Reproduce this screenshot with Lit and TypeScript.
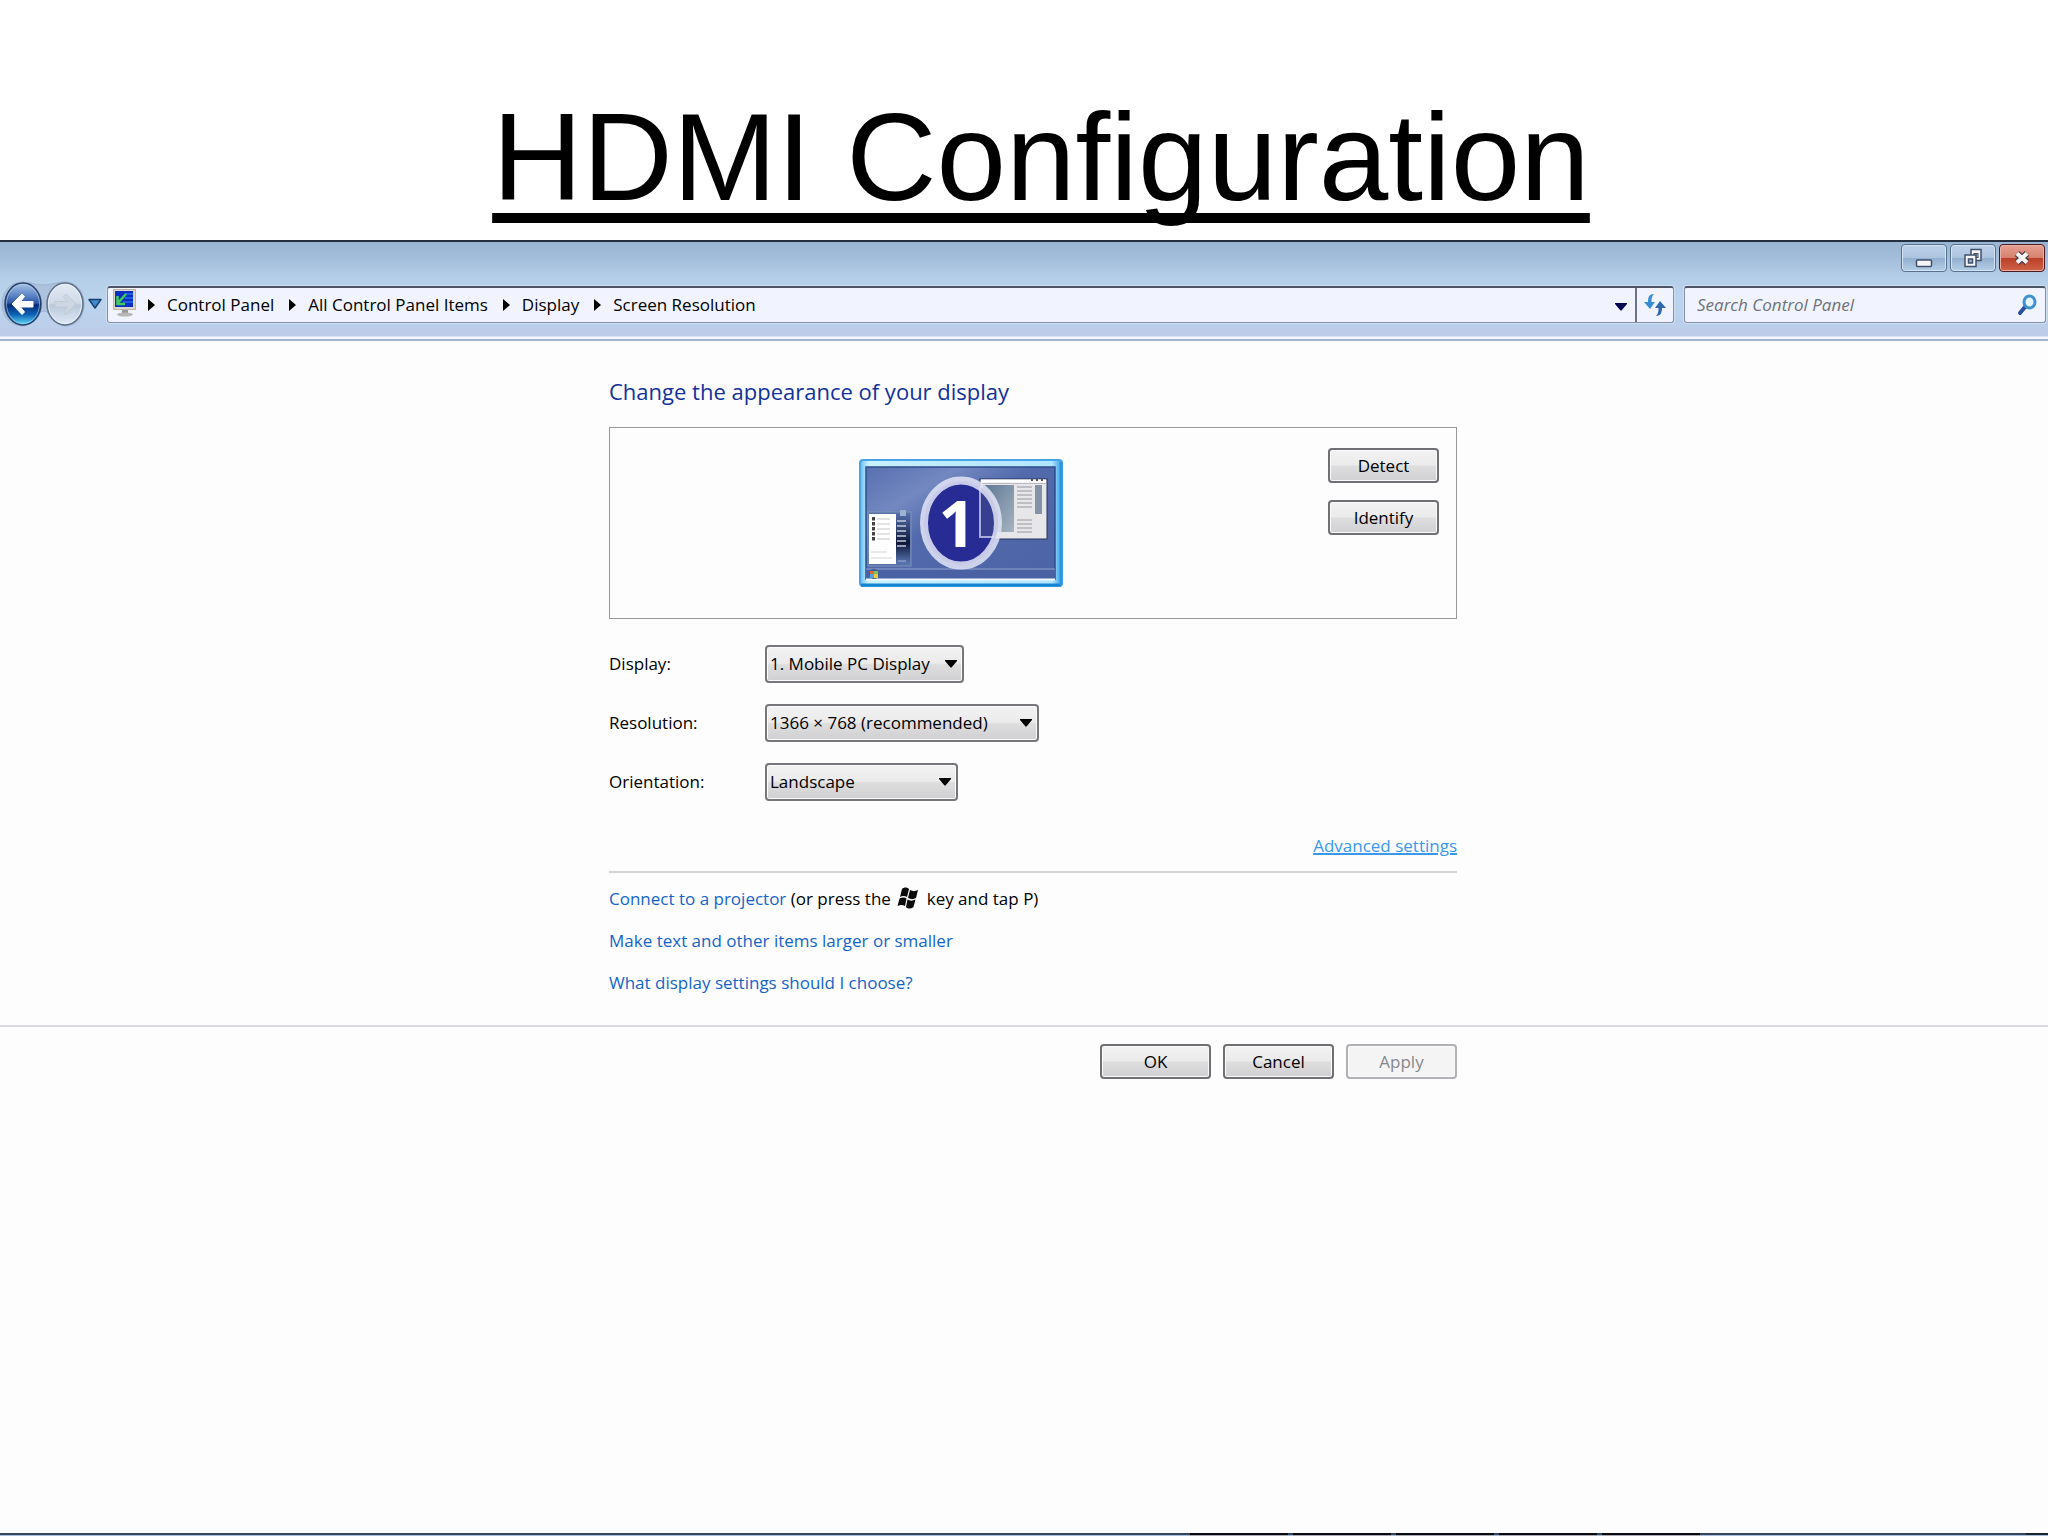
import { LitElement, html, css, svg } from "lit";
import { customElement, state } from "lit/decorators.js";

interface Choice {
  id: string;
  label: string;
  size: string;
  options: string[];
}

const CRUMBS = ["Control Panel", "All Control Panel Items", "Display", "Screen Resolution"];

const CHOICES: Choice[] = [
  { id: "display", label: "Display:", size: "small", options: ["1. Mobile PC Display"] },
  { id: "resolution", label: "Resolution:", size: "large", options: ["1366 × 768 (recommended)", "1280 × 720", "1024 × 768"] },
  { id: "orientation", label: "Orientation:", size: "narrow", options: ["Landscape", "Portrait"] },
];

const crumbArrow = html`<svg class="crumb-arrow" width="7" height="12" viewBox="0 0 7 12" aria-hidden="true"><path d="M0 0L7 6L0 12Z" fill="#000" /></svg>`;

const downArrow = html`<svg class="down-arrow" width="12" height="8" viewBox="0 0 12 8" aria-hidden="true"><path d="M0 0H12V1L6.5 7.5H5.5L0 1Z" fill="currentColor" /></svg>`;

@customElement("nav-bar")
export class NavBar extends LitElement {
  static styles = css`
    :host { display: block; }
    .chrome {
      border-top: 2px solid #24303f;
      border-bottom: 2px solid #a5b3cc;
      background: linear-gradient(#9ab5d2 0, #a0bbd8 12px, #b7d0ea 40px, #bbd4ee 60px, #bccce9 94px, #f0f6fc 95px, #f0f6fc 100%);
    }
    button { font: inherit; margin: 0; padding: 0; border: 0; background: none; }
    .captions { display: flex; justify-content: flex-end; gap: 3px; padding: 2px 3px 0; }
    .caption {
      display: grid;
      place-items: center;
      box-sizing: border-box;
      width: 46px;
      height: 28px;
      border: 1px solid #56708f;
      border-radius: 4px;
      box-shadow: inset 0 0 0 1px #d5e3f2;
      background: linear-gradient(#bdd0e8 0, #adc4df 50%, #92afce 51%, #b4cfe8 100%);
    }
    .caption.close {
      border-color: #4d1820;
      box-shadow: inset 0 0 0 1px #eeb2a5;
      background: linear-gradient(#e5a092 0, #d78270 48%, #bb3f29 50%, #cf6347 100%);
    }
    .row { display: flex; align-items: center; padding: 10px 2px 13px 4px; }
    .history { position: relative; display: flex; gap: 4px; height: 44px; }
    .tray { position: absolute; left: -3px; top: -1px; }
    .round { position: relative; display: block; width: 38px; height: 44px; }
    .recent { display: block; margin: 0 5px 0 4px; height: 12px; line-height: 0; }
    .history svg, .caption svg, .refresh svg { display: block; }
    .address {
      flex: 1;
      display: flex;
      align-items: stretch;
      box-sizing: border-box;
      height: 37px;
      border: 1px solid #8390a5;
      border-top: 2px solid #4c5567;
      border-radius: 3px;
      background: #f1f4fe;
      box-shadow: 0 0 0 1px #cfdff2;
    }
    .crumbs { flex: 1; display: flex; align-items: center; list-style: none; margin: 0; padding: 0 0 0 5px; }
    .crumbs li { display: flex; align-items: center; }
    .crumbs a { color: #000; text-decoration: none; line-height: 24px; }
    .place { display: block; margin-right: 11px; margin-bottom: 4px; }
    .crumb-arrow { margin-right: 12px; }
    .crumbs li + li .crumb-arrow { margin-left: 15px; }
    .history-list { width: 28px; color: #05054f; }
    .refresh { display: grid; place-items: center; width: 38px; border-left: 2px solid #6b7486; }
    .search {
      display: flex;
      align-items: center;
      box-sizing: border-box;
      width: 362px;
      height: 37px;
      margin-left: 10px;
      padding: 0 8px 0 12px;
      border: 1px solid #8390a5;
      border-top: 2px solid #4c5567;
      border-radius: 3px;
      background: #f1f4fe;
      box-shadow: 0 0 0 1px #cfdff2;
    }
    .search input { flex: 1; min-width: 0; border: 0; padding: 0; outline: 0; background: none; font: inherit; font-style: italic; }
    .search input::placeholder { color: #6f727a; opacity: 1; }
  `;

  render() {
    return html`
      <header class="chrome">
        <div class="captions">
          <button class="caption" aria-label="Minimize">
            <svg width="18" height="20" viewBox="0 0 18 20"><rect x="1.5" y="12" width="15" height="6.5" rx="1" fill="#f6f6f6" stroke="#41506a" stroke-width="1.5" /></svg>
          </button>
          <button class="caption" aria-label="Restore">
            <svg width="20" height="20" viewBox="0 0 20 20">
              <rect x="8" y="1.5" width="10" height="11" fill="#f6f6f6" stroke="#41506a" stroke-width="1.5" />
              <rect x="11" y="5.5" width="4" height="4" fill="#9db6d2" stroke="#41506a" />
              <rect x="2" y="7" width="11" height="11.5" fill="#f6f6f6" stroke="#41506a" stroke-width="1.5" />
              <rect x="5.5" y="11" width="4" height="4" fill="#9db6d2" stroke="#41506a" stroke-width="1.5" />
            </svg>
          </button>
          <button class="caption close" aria-label="Close">
            <svg width="18" height="18" viewBox="0 0 18 18">
              <path d="M4 4.500L14 13.500M14 4.500L4 13.500" stroke="#4a3f4c" stroke-width="6.500" />
              <path d="M4 4.500L14 13.500M14 4.500L4 13.500" stroke="#f8f4f4" stroke-width="4" />
            </svg>
          </button>
        </div>
        <nav class="row">
          <div class="history">
            <svg class="tray" width="84" height="46" viewBox="0 0 84 46" aria-hidden="true">
              <path d="M22 1C30 1 34 4 42 4S56 1 64 1C76 1 83 11 83 23S76 45 64 45C54 45 50 30 43 30S32 45 22 45C9 45 1 35 1 23S9 1 22 1Z" fill="#adc2dc" stroke="#9db3cf" />
            </svg>
            <button class="round" aria-label="Back">
              <svg width="38" height="44" viewBox="0 0 38 44">
                <defs>
                  <linearGradient id="blue" x1="0" y1="0" x2="0" y2="1">
                    <stop offset="0" stop-color="#a9c4e8" /><stop offset=".3" stop-color="#5c84c4" /><stop offset=".48" stop-color="#2c56a4" />
                    <stop offset=".52" stop-color="#062a78" /><stop offset=".75" stop-color="#0d62b4" /><stop offset="1" stop-color="#5fe0fa" />
                  </linearGradient>
                </defs>
                <ellipse cx="19" cy="22" rx="18" ry="21" fill="url(#blue)" stroke="#27406c" stroke-width="1.5" />
                <ellipse cx="19" cy="22" rx="16.5" ry="19.5" fill="none" stroke="#b7d2f0" stroke-opacity=".6" />
                <path d="M8 22L18 12L20.5 14.500L16.500 19.500H29V25H16.500L20.500 30L18 32.500Z" fill="#fff" stroke="#fff" stroke-linejoin="round" />
              </svg>
            </button>
            <button class="round" aria-label="Forward">
              <svg width="38" height="44" viewBox="0 0 38 44">
                <defs>
                  <linearGradient id="pale" x1="0" y1="0" x2="0" y2="1">
                    <stop offset="0" stop-color="#e2eaf4" /><stop offset=".48" stop-color="#cfdae8" />
                    <stop offset=".52" stop-color="#b9c8da" /><stop offset="1" stop-color="#dfeaf6" />
                  </linearGradient>
                </defs>
                <ellipse cx="19" cy="22" rx="18" ry="21" fill="url(#pale)" stroke="#5f7088" stroke-width="1.5" />
                <ellipse cx="19" cy="22" rx="16.5" ry="19.5" fill="none" stroke="#eef4fa" stroke-opacity=".8" />
                <path d="M30 22L20 12L17.5 14.500L21.500 19.500H9V25H21.500L17.500 30L20 32.500Z" fill="#cdd6e1" stroke="#c0cad7" stroke-linejoin="round" />
              </svg>
            </button>
          </div>
          <button class="recent" aria-label="Recent pages">
            <svg width="14" height="12" viewBox="0 0 14 12"><path d="M1 1.5H13L7 10Z" fill="#3f8fce" stroke="#1b3f70" stroke-width="1.5" stroke-linejoin="round" /></svg>
          </button>
          <div class="address">
            <ol class="crumbs">
              <svg class="place" width="24" height="28" viewBox="0 0 24 28" aria-hidden="true">
                <rect x=".5" y=".5" width="22" height="20" fill="#ddd6cb" stroke="#bdb5aa" />
                <rect x="2" y="2" width="18" height="16" fill="#0b2ec4" />
                <path d="M12 5H20M12 9H20M10 13H20" stroke="#2470e8" stroke-width="1.5" />
                <path d="M13 5L5 14M4.500 7V15H12" fill="none" stroke="#3ccf5a" stroke-width="2.500" />
                <path d="M9 21H15V24H9Z" fill="#9a9a9a" /><ellipse cx="12" cy="25.5" rx="8" ry="2" fill="#b9b7b4" />
              </svg>
              ${CRUMBS.map((name) => html`<li>${crumbArrow}<a href="#">${name}</a></li>`)}
            </ol>
            <button class="history-list" aria-label="Previous locations">${downArrow}</button>
            <button class="refresh" aria-label="Refresh">
              <svg width="22" height="24" viewBox="0 0 22 24">
                <path d="M10 1C5 1 4 4 4 9H0L6 16L11 9H7.500C7.500 5 8 3 10 1Z" fill="#3a8fd4" />
                <path d="M12 23C17 23 18 19 18 15H22L16 8L11 15H14.500C14.500 19 14 21 12 23Z" fill="#2f66b0" />
              </svg>
            </button>
          </div>
          <label class="search">
            <input type="search" placeholder="Search Control Panel" aria-label="Search Control Panel" />
            <svg width="20" height="22" viewBox="0 0 20 22" aria-hidden="true">
              <path d="M8 13L3 19" stroke="#2a4fa0" stroke-width="4" stroke-linecap="round" />
              <ellipse cx="12.5" cy="8" rx="5.5" ry="6" fill="#e6f4fe" stroke="#3f92d2" stroke-width="3" />
            </svg>
          </label>
        </nav>
      </header>
    `;
  }
}

@customElement("monitor-preview")
export class MonitorPreview extends LitElement {
  static styles = css`
    :host { display: block; }
    .monitor { display: block; }
    .number { font: bold 65px "Open Sans", "Noto Sans", sans-serif; }
  `;

  render() {
    const list = [0, 1, 2, 3, 4].map((i) => svg`
      <rect x="13" y=${58 + i * 5} width="3" height="3.5" fill="#444" />
      <path d=${`M18 ${60 + i * 5}H31`} stroke="#c5c5c8" />`);
    const menu = [0, 1, 2, 3, 4, 5].map((i) => svg`<path d=${`M38 ${62 + i * 5}H47`} stroke="#c4cbe0" stroke-width="1.5" />`);
    const lines = [28, 32, 36, 40, 44, 48, 61, 65, 69, 73].map((y) => svg`<path d=${`M158 ${y}H173`} stroke="#b2b2b6" stroke-width="1.5" />`);
    return html`
      <svg class="monitor" width="204" height="128" viewBox="0 0 204 128" role="img" aria-label="Monitor 1">
        <defs>
          <linearGradient id="frame" x1="0" y1="0" x2="1" y2="0"><stop offset="0" stop-color="#6cb9ee" /><stop offset=".04" stop-color="#c8f0ff" /><stop offset=".95" stop-color="#b2e6ff" /><stop offset="1" stop-color="#329be4" /></linearGradient>
          <linearGradient id="desk" x1="0" y1="0" x2="1" y2="1"><stop offset="0" stop-color="#5870b0" /><stop offset=".25" stop-color="#7388c0" /><stop offset=".45" stop-color="#526aac" /><stop offset="1" stop-color="#4c63a4" /></linearGradient>
          <linearGradient id="pane" x1="0" y1="0" x2="1" y2="1"><stop offset="0" stop-color="#5e7896" /><stop offset="1" stop-color="#a5b3bf" /></linearGradient>
          <linearGradient id="side" x1="0" y1="0" x2="0" y2="1"><stop offset="0" stop-color="#5470ac" /><stop offset=".6" stop-color="#0e1838" /><stop offset="1" stop-color="#5874b0" /></linearGradient>
        </defs>
        <rect x="1" y="1" width="202" height="126" rx="3" fill="url(#frame)" stroke="#48a4e4" stroke-width="2" />
        <path d="M2 126H202" stroke="#1583d2" stroke-width="3" />
        <path d="M202 3V126" stroke="#2b97e2" stroke-width="3" />
        <rect x="7" y="8" width="189" height="112" fill="url(#desk)" stroke="#2d4d8c" stroke-width="1.5" />
        <path d="M7 110H196" stroke="#8fa2cf" /><path d="M7 111H196V120H7Z" fill="#4a62a4" />
        <path d="M7 120.5H196" stroke="#eefaff" stroke-width="2" />
        <circle cx="15" cy="115" r="5" fill="#3f5f8c" /><path d="M11 112H15V115H11Z" fill="#e46a3c" /><path d="M15 112H19V115H15Z" fill="#79c257" /><path d="M11 115H15V119H11Z" fill="#4da4e0" /><path d="M15 115H19V119H15Z" fill="#f0c648" />
        <rect x="9" y="53" width="43" height="54" fill="#5570aa" stroke="#8093b8" />
        <rect x="36" y="54" width="15" height="50" fill="url(#side)" />
        <rect x="10" y="55" width="27" height="50" fill="#fff" />
        <rect x="41" y="51" width="6" height="6" fill="#9db2d0" />
        ${list}${menu}
        <path d="M12 93H28M12 99H33" stroke="#d4d4d6" /><path d="M39 102H47" stroke="#a9b5d0" />
        <rect x="121" y="20" width="67" height="60" fill="#e7e7ea" stroke="#27345c" />
        <path d="M122 22H187" stroke="#fff" stroke-width="3" /><path d="M122 24.5H187" stroke="#b9b9be" />
        <path d="M172 21H174M177 21H179M182 21H184" stroke="#555" stroke-width="2" />
        <rect x="124" y="26" width="31" height="47" fill="url(#pane)" />
        <rect x="176" y="26" width="7" height="29" fill="#8492a5" />
        ${lines}
        <ellipse cx="102" cy="64" rx="37" ry="42" fill="#272b94" />
        <path d="M121 28C132 34 139 48 139 64C139 69 138 74 136 78H121Z" fill="#3f468f" opacity=".75" />
        <path d="M121 28V78H135" fill="none" stroke="#a9addb" stroke-width="2" />
        <ellipse cx="102" cy="64" rx="37" ry="42.5" fill="none" stroke="#e2e4f6" stroke-opacity=".86" stroke-width="8" />
        <text class="number" x="98" y="88" text-anchor="middle" fill="#fff">1</text>
      </svg>
    `;
  }
}

@customElement("app-root")
export class AppRoot extends LitElement {
  @state() private values: Record<string, string> = {};

  static styles = css`
    :host {
      display: flex;
      flex-direction: column;
      min-height: 100vh;
      background: #fdfdfd;
      color: #000;
      font: 17px/24px "Open Sans", "Noto Sans", sans-serif;
    }
    .title {
      margin: 0;
      padding: 85px 0 11px 34px;
      background: #fff;
      color: #000;
      font: 125px/144px "Liberation Sans", Arial, sans-serif;
      text-align: center;
      text-decoration: underline;
      text-decoration-thickness: 10px;
      text-underline-offset: 13px;
      text-decoration-skip-ink: none;
    }
    .body { padding-left: 18px; }
    .column { max-width: 848px; margin: 0 auto; }
    .heading { margin: 0; padding: 34px 0 20px; color: #12329a; font-size: 22px; line-height: 32px; font-weight: 400; }
    .preview {
      display: grid;
      grid-template-columns: 1fr auto;
      gap: 16px;
      align-items: start;
      box-sizing: border-box;
      min-height: 192px;
      padding: 20px 17px 16px 0;
      border: 1px solid #97979c;
    }
    .monitor { justify-self: center; padding-top: 11px; }
    .side { display: grid; gap: 17px; }
    button {
      box-sizing: border-box;
      width: 111px;
      height: 35px;
      padding: 0;
      border: 2px solid #707074;
      border-radius: 4px;
      box-shadow: inset 0 0 0 1px #fbfbfb;
      background: linear-gradient(#f2f2f3 0, #ebebec 48%, #dededf 52%, #d0d0d2 100%);
      color: #000;
      font: inherit;
    }
    button:disabled { border-color: #b1b1b5; background: #f4f4f5; color: #87878c; }
    .choices { display: grid; gap: 21px; padding-top: 26px; }
    .choice { display: grid; grid-template-columns: 156px auto; align-items: center; justify-content: start; }
    .picker { display: grid; align-items: center; }
    .picker.small { width: 199px; }
    .picker.large { width: 274px; }
    .picker.narrow { width: 193px; }
    .picker select {
      grid-area: 1 / 1;
      appearance: none;
      box-sizing: border-box;
      width: 100%;
      height: 38px;
      margin: 0;
      padding: 0 24px 0 3px;
      border: 2px solid #77777b;
      border-radius: 4px;
      box-shadow: inset 0 0 0 1px #fbfbfb;
      background: linear-gradient(#f2f2f3 0, #ebebec 48%, #dededf 52%, #d0d0d2 100%);
      color: #000;
      font: inherit;
    }
    .picker svg { grid-area: 1 / 1; justify-self: end; margin-right: 7px; color: #000; pointer-events: none; }
    a { color: #1464c8; text-decoration: none; }
    .advanced { padding: 33px 0 13px; border-bottom: 2px solid #d4d4d8; text-align: right; }
    .advanced a { color: #3a97ee; text-decoration: underline; text-decoration-thickness: 2px; }
    .links { display: grid; gap: 18px; margin: 0; padding: 14px 0 30px; list-style: none; }
    .key { margin: 0 3px -4px 2px; }
    .footer { border-top: 2px solid #dadade; padding: 17px 0 0 18px; }
    .actions { display: flex; justify-content: flex-end; gap: 12px; }
    .taskbar { display: flex; gap: 5px; box-sizing: border-box; height: 3px; margin-top: auto; padding-left: 1190px; border-top: 2px solid #35465c; background: #a9bfdc; }
    .task { width: 98px; height: 2px; margin-top: -2px; background: #0b0b12; border-bottom: 1px solid #a9a9b2; }
    .corner { width: 22px; height: 2px; margin: -2px 0 0 auto; background: #1c232d; }
  `;

  private pick(id: string, event: Event) {
    this.values = { ...this.values, [id]: (event.target as HTMLSelectElement).value };
  }

  render() {
    const changed = Object.keys(this.values).length > 0;
    return html`
      <h1 class="title">HDMI Configuration</h1>
      <nav-bar></nav-bar>
      <main class="body">
        <div class="column">
          <h2 class="heading">Change the appearance of your display</h2>
          <section class="preview">
            <monitor-preview class="monitor"></monitor-preview>
            <div class="side"><button>Detect</button><button>Identify</button></div>
          </section>
          <form class="choices">
            ${CHOICES.map((choice) => html`
              <div class="choice">
                <label for=${choice.id}>${choice.label}</label>
                <div class="picker ${choice.size}">
                  <select id=${choice.id} @change=${(e: Event) => this.pick(choice.id, e)}>
                    ${choice.options.map((option) => html`<option>${option}</option>`)}
                  </select>
                  ${downArrow}
                </div>
              </div>`)}
          </form>
          <div class="advanced"><a href="#">Advanced settings</a></div>
          <ul class="links">
            <li><a href="#">Connect to a projector</a> (or press the <svg class="key" width="22" height="22" viewBox="0 0 22 22" role="img" aria-label="Windows"><path d="M5 2C7 0 10 0 12 2L10 10C8 8.500 5 8.500 3 10ZM13 3C16 4.500 18 4.500 21 3L19 11C16 12.500 14 12.500 11 11ZM2.500 11.500C5 10 8 10 9.500 11.500L8 19C6 17.500 3 17.500 .5 19ZM10.500 12.500C13 14 16 14 18.500 12.500L16.500 20C14 22 11 22 9 20Z" fill="#0a0a0a" /></svg> key and tap P)</li>
            <li><a href="#">Make text and other items larger or smaller</a></li>
            <li><a href="#">What display settings should I choose?</a></li>
          </ul>
        </div>
      </main>
      <footer class="footer">
        <div class="column actions"><button>OK</button><button>Cancel</button><button ?disabled=${!changed}>Apply</button></div>
      </footer>
      <div class="taskbar">
        ${[1, 2, 3, 4, 5].map(() => html`<span class="task"></span>`)}
        <span class="corner"></span>
      </div>
    `;
  }
}
